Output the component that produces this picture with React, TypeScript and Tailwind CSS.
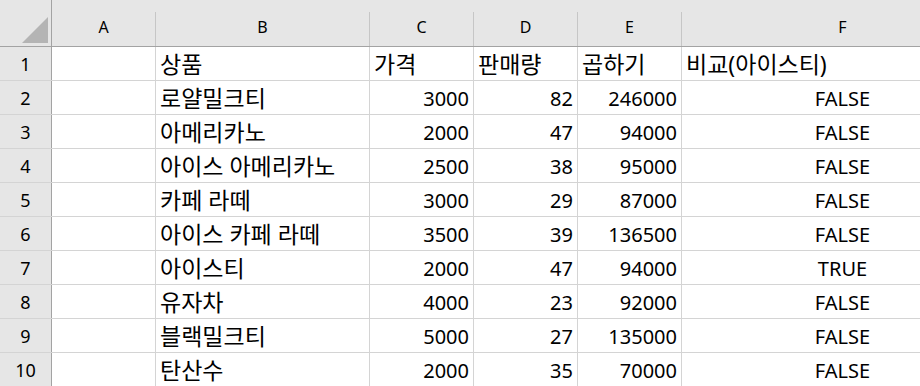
const COLS = [
  { label: 'A', w: 'w-[104px]' },
  { label: 'B', w: 'w-[214px]' },
  { label: 'C', w: 'w-[104px]' },
  { label: 'D', w: 'w-[104px]' },
  { label: 'E', w: 'w-[104px]' },
  { label: 'F', w: 'w-[322px]' },
];

type Row = [string, string, string, string, string];

const ROWS: Row[] = [
  ['상품', '가격', '판매량', '곱하기', '비교(아이스티)'],
  ['로얄밀크티', '3000', '82', '246000', 'FALSE'],
  ['아메리카노', '2000', '47', '94000', 'FALSE'],
  ['아이스 아메리카노', '2500', '38', '95000', 'FALSE'],
  ['카페 라떼', '3000', '29', '87000', 'FALSE'],
  ['아이스 카페 라떼', '3500', '39', '136500', 'FALSE'],
  ['아이스티', '2000', '47', '94000', 'TRUE'],
  ['유자차', '4000', '23', '92000', 'FALSE'],
  ['블랙밀크티', '5000', '27', '135000', 'FALSE'],
  ['탄산수', '2000', '35', '70000', 'FALSE'],
];

const font = "font-['Noto_Sans','Noto_Sans_CJK_KR',sans-serif]";

function Cell({ w, align, children }: { w: string; align: 'left' | 'right' | 'center'; children?: string }) {
  const justify = align === 'left' ? 'justify-start pl-[4px]' : align === 'right' ? 'justify-end pr-[4px]' : 'justify-center';
  const korean = children && /[가-힣]/.test(children);
  return (
    <div className={`${w} shrink-0 h-full flex items-center border-r border-[#d4d4d4] ${justify} ${korean ? 'text-[23px] pt-0' : 'text-[20px] pt-[2px]'}`}>
      <span className="whitespace-nowrap">{children}</span>
    </div>
  );
}

export default function App() {
  return (
    <div className={`w-[920px] h-[386px] overflow-hidden bg-white text-black ${font}`}>
      {/* column headers */}
      <div className="flex h-[47px] bg-[#e6e6e6] border-b border-[#a3a3a3]">
        <div className="w-[52px] shrink-0 flex items-end justify-end border-r border-[#a3a3a3] pr-[3px] pb-[3px]">
          <svg width="26" height="26" viewBox="0 0 26 26">
            <polygon points="26,0 26,26 0,26" fill="#b4b4b4" />
          </svg>
        </div>
        {COLS.map((c) => (
          <div key={c.label} className={`${c.w} shrink-0 flex flex-col justify-end`}>
            <div className="h-[34px] flex items-center justify-center border-r border-[#c6c6c6] text-[16px] leading-[20px] pb-[4px]">
              {c.label}
            </div>
          </div>
        ))}
      </div>

      {ROWS.map((r, i) => (
        <div key={i} className="flex h-[34px] border-b border-[#d4d4d4] leading-[26px]">
          <div className="w-[52px] shrink-0 bg-[#e6e6e6] border-r border-[#a3a3a3] flex items-center justify-center text-[18px] pt-[1px]">
            {i + 1}
          </div>
          <Cell w={COLS[0].w} align="left" />
          <Cell w={COLS[1].w} align="left">{r[0]}</Cell>
          <Cell w={COLS[2].w} align={i === 0 ? 'left' : 'right'}>{r[1]}</Cell>
          <Cell w={COLS[3].w} align={i === 0 ? 'left' : 'right'}>{r[2]}</Cell>
          <Cell w={COLS[4].w} align={i === 0 ? 'left' : 'right'}>{r[3]}</Cell>
          <Cell w={COLS[5].w} align={i === 0 ? 'left' : 'center'}>{r[4]}</Cell>
        </div>
      ))}
    </div>
  );
}
